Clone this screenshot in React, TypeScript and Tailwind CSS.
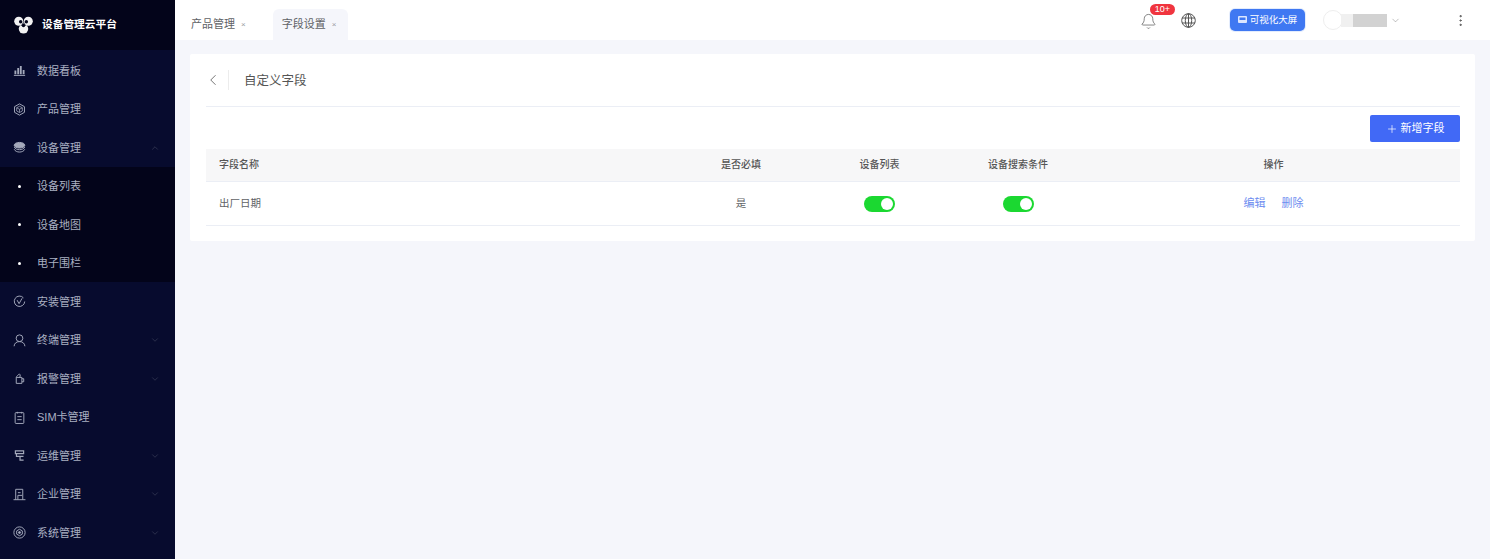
import { ChevronDown, ChevronLeft, ChevronUp, Bell, MoreVertical, Plus } from 'lucide-react';
import type { ReactNode } from 'react';

const cjk = { fontFamily: '"Liberation Sans", "Noto Sans CJK SC", sans-serif' };

const svgProps = {
  width: 13,
  height: 13,
  viewBox: '0 0 12 12',
  fill: 'none',
  stroke: 'currentColor',
  strokeWidth: 0.9,
};

const icons: Record<string, ReactNode> = {
  chart: (
    <svg {...svgProps}>
      <path d="M.8 10.500h10.400" />
      <path d="M2.200 9.500V6M4.800 9.500V3.800M7.200 9.500V1.800M9.800 9.500V5.500" strokeWidth="1.700" />
    </svg>
  ),
  box: (
    <svg {...svgProps}>
      <path d="M6 .8 10.600 3.400v5.200L6 11.200 1.400 8.600V3.400z" />
      <path d="M3.400 4.400 6 5.800l2.600-1.400M6 5.800v3M3.400 4.400 6 3l2.600 1.400v3L6 8.800 3.400 7.400z" strokeWidth="0.700" />
    </svg>
  ),
  layers: (
    <svg {...svgProps}>
      <ellipse cx="6" cy="3.900" rx="4.900" ry="2.600" fill="currentColor" />
      <path d="M1.100 5.600c.8 1.700 2.800 2.400 4.900 2.400s4.100-.7 4.900-2.400M1.100 7.600c.8 1.800 2.800 2.600 4.900 2.600s4.100-.8 4.900-2.600" />
    </svg>
  ),
  check: (
    <svg {...svgProps}>
      <path d="M9.600 2.600A4.800 4.800 0 1 0 10.800 6" />
      <path d="M3.800 4.800 5.600 8 8.400 3" />
    </svg>
  ),
  user: (
    <svg {...svgProps}>
      <circle cx="6" cy="3.900" r="3.100" />
      <path d="M1 11.300c.2-2.700 2.200-4.300 5-4.300s4.800 1.600 5 4.300" />
    </svg>
  ),
  alarm: (
    <svg {...svgProps}>
      <path d="M3 5h5.200v5.500H3zM3 5c.2-1.400 1.300-1.200 1.800-2.300.3-.8 1.400-1 1.800-.2.300.7-.2 1.700-.4 2.500M8.200 6.200h1.700v2.800H8.200" />
    </svg>
  ),
  sim: (
    <svg {...svgProps}>
      <rect x="2" y="1.500" width="8" height="10" rx="0.800" />
      <path d="M4 .8v1.500M8 .8v1.500M4 5.200h4M4 8h4" />
    </svg>
  ),
  ops: (
    <svg {...svgProps}>
      <path d="M2.200 1.800h7.600v2.400H2.200zM3.200 4.200v2.600h6.500M6.500 6.800v3.400h3.300" strokeWidth="1.100" />
    </svg>
  ),
  company: (
    <svg {...svgProps}>
      <path d="M2.500 10.800V1.200h6.500v9.600M.5 10.800h11M4.500 4.300h2.500M4.500 6.800h4M4.500 6.800v4" />
    </svg>
  ),
  system: (
    <svg {...svgProps}>
      <circle cx="6" cy="6" r="5.200" />
      <path d="M6 3 8.600 4.500v3L6 9 3.400 7.500v-3z" />
      <circle cx="6" cy="6" r="0.900" fill="currentColor" />
    </svg>
  ),
};

type MenuItem = { label: string; icon?: string; arrow?: 'up' | 'down'; sub?: boolean };

const menu: MenuItem[] = [
  { label: '数据看板', icon: 'chart' },
  { label: '产品管理', icon: 'box' },
  { label: '设备管理', icon: 'layers', arrow: 'up' },
  { label: '设备列表', sub: true },
  { label: '设备地图', sub: true },
  { label: '电子围栏', sub: true },
  { label: '安装管理', icon: 'check' },
  { label: '终端管理', icon: 'user', arrow: 'down' },
  { label: '报警管理', icon: 'alarm', arrow: 'down' },
  { label: 'SIM卡管理', icon: 'sim' },
  { label: '运维管理', icon: 'ops', arrow: 'down' },
  { label: '企业管理', icon: 'company', arrow: 'down' },
  { label: '系统管理', icon: 'system', arrow: 'down' },
];

function Logo() {
  return (
    <svg width="19" height="18" viewBox="0 0 20 19">
      <circle cx="5" cy="5.500" r="4.800" fill="#f2f2f2" />
      <circle cx="15" cy="5.500" r="4.800" fill="#f2f2f2" />
      <circle cx="10" cy="13.500" r="5" fill="#f2f2f2" />
      <circle cx="7" cy="6" r="1.800" fill="#03041a" />
      <circle cx="13" cy="6" r="1.800" fill="#03041a" />
      <path d="M10 5.500 13 10.500H7z" fill="#6d6f7c" />
      <circle cx="10" cy="10" r="1.800" fill="#03041a" />
    </svg>
  );
}

function Globe() {
  return (
    <svg width="15" height="15" viewBox="0 0 15 15" fill="none" stroke="#555" strokeWidth="1" className="ml-[24px]">
      <circle cx="7.500" cy="7.500" r="6.800" />
      <ellipse cx="7.500" cy="7.500" rx="3.200" ry="6.800" />
      <path d="M7.500.7v13.600M1 5h13M1 10h13" />
    </svg>
  );
}

function Sidebar() {
  return (
    <aside className="flex w-[175px] shrink-0 flex-col bg-[#070b2e]">
      <div className="flex h-[50px] items-center gap-[9px] bg-[#03041a] pb-[1px] pl-[14px]">
        <Logo />
        <span className="text-[10.700px] font-bold text-white">设备管理云平台</span>
      </div>
      <nav className="flex flex-col pt-[1px]">
        {menu.map((item) => (
          <div
            key={item.label}
            className={`flex h-[38.500px] items-center pr-[15px] pt-[1px] text-[11px] text-[#aab0c2] ${item.sub ? 'bg-[#03041a]' : ''}`}
          >
            <span className="flex w-[37px] shrink-0 justify-center pl-[4px] pr-[3px] text-[#a4a9bb]">
              {item.sub ? <span className="h-[3px] w-[3px] rounded-full bg-white" /> : icons[item.icon ?? '']}
            </span>
            <span className="flex-1">{item.label}</span>
            {item.arrow === 'up' && <ChevronUp size={10} strokeWidth={1} className="text-[#5d6178]" />}
            {item.arrow === 'down' && <ChevronDown size={10} strokeWidth={1} className="text-[#5d6178]" />}
          </div>
        ))}
      </nav>
    </aside>
  );
}

function TopBar() {
  return (
    <header className="flex h-[40px] shrink-0 items-end bg-white">
      <div className="flex h-[30px] items-center pb-[1px] pl-[16px] text-[11px] text-[#606266]">
        <span>产品管理</span>
        <span className="ml-[6px] text-[8px] text-[#9a9ca3]">×</span>
      </div>
      <div className="ml-[27px] flex h-[31px] w-[75px] items-center rounded-t-[6px] bg-[#f5f6fb] pl-[9px] text-[11px] text-[#606266]">
        <span>字段设置</span>
        <span className="ml-[6px] text-[8px] text-[#9a9ca3]">×</span>
      </div>
      <div className="ml-auto flex h-[40px] items-center">
        <div className="relative mt-[3px]">
          <Bell size={17} strokeWidth={1} className="text-[#555]" />
          <span className="absolute -top-[9px] left-[10px] flex h-[11px] w-[25px] items-center justify-center rounded-full bg-[#f0353f] text-[9px] font-medium text-white">
            10+
          </span>
        </div>
        <Globe />
        <div className="ml-[34px] flex h-[22px] w-[75px] items-center justify-center gap-[3px] rounded-[5px] bg-[#3f78f2] text-[9.500px] text-white shadow-[0_0_0_1px_#e3ecfd]">
          <svg width="9" height="8" viewBox="0 0 9 8">
            <rect width="9" height="7" rx="1" fill="#dbe6ff" />
            <rect x="1.500" y="1.500" width="6" height="2.500" fill="#3f78f2" />
          </svg>
          <span>可视化大屏</span>
        </div>
        <div className="ml-[18px] h-[20px] w-[20px] rounded-full border border-[#eeeeee]" />
        <div className="ml-[-2px] flex h-[13px] w-[46px] bg-[#f0f0f0]">
          <div className="ml-[12px] h-full w-[34px] bg-[#d2d2d2]" />
        </div>
        <ChevronDown size={11} strokeWidth={1} className="ml-[3px] text-[#777]" />
        <MoreVertical size={15} strokeWidth={1.600} className="ml-[52px] mr-[22px] text-[#555]" />
      </div>
    </header>
  );
}

function Toggle() {
  return (
    <span className="flex h-[16px] w-[31px] items-center justify-end rounded-full bg-[#1bd831] pr-[2px]">
      <span className="h-[12px] w-[12px] rounded-full bg-white" />
    </span>
  );
}

const rowGrid = 'grid grid-cols-[466px_138px_139px_138px_1fr] items-center';

function FieldsCard() {
  return (
    <section className="rounded-[2px] bg-white pb-[15px] pl-[16px] pr-[15px]">
      <div className="flex h-[53px] items-center border-b border-[#ebeef5]">
        <ChevronLeft size={18} strokeWidth={1.200} className="-ml-[2px] text-[#666]" />
        <span className="ml-[6px] h-[20px] w-px bg-[#ececec]" />
        <h1 className="ml-[15px] mt-[2px] text-[12.500px] font-normal text-[#555]">自定义字段</h1>
      </div>
      <div className="flex justify-end pt-[8px]">
        <button className="flex h-[27px] w-[90px] items-center justify-center gap-[3px] rounded-[2px] bg-[#4169f6] text-[11px] text-white">
          <Plus size={12} strokeWidth={1.400} />
          新增字段
        </button>
      </div>
      <div className={`${rowGrid} mt-[7px] h-[33px] border-b border-[#ebeef5] bg-[#f7f7f8] pb-[2px] text-[10px] font-medium text-[#555]`}>
        <span className="pl-[13px]">字段名称</span>
        <span className="text-center">是否必填</span>
        <span className="text-center">设备列表</span>
        <span className="text-center">设备搜索条件</span>
        <span className="text-center">操作</span>
      </div>
      <div className={`${rowGrid} h-[44px] border-b border-[#ebeef5] text-[10.500px] text-[#606266]`}>
        <span className="pl-[13px]">出厂日期</span>
        <span className="text-center">是</span>
        <span className="flex justify-center"><Toggle /></span>
        <span className="flex justify-center"><Toggle /></span>
        <span className="flex justify-center gap-[16px] text-[11px] text-[#6d8cf0]">
          <span>编辑</span>
          <span>删除</span>
        </span>
      </div>
    </section>
  );
}

export default function App() {
  return (
    <div className="flex h-[559px] w-[1490px] overflow-hidden bg-[#f5f6fb]" style={cjk}>
      <Sidebar />
      <main className="flex min-w-0 flex-1 flex-col">
        <TopBar />
        <div className="px-[15px] pt-[14px]">
          <FieldsCard />
        </div>
      </main>
    </div>
  );
}
